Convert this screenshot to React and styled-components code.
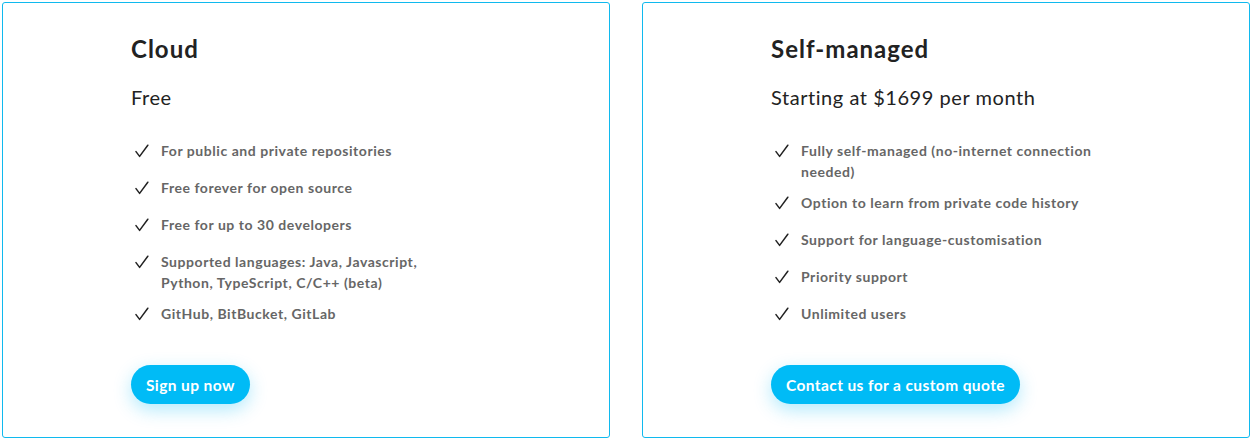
import React from "react";
import styled, { createGlobalStyle } from "styled-components";

const plans = [
  {
    name: "Cloud",
    price: "Free",
    features: [
      "For public and private repositories",
      "Free forever for open source",
      "Free for up to 30 developers",
      "Supported languages: Java, Javascript, Python, TypeScript, C/C++ (beta)",
      "GitHub, BitBucket, GitLab",
    ],
    cta: "Sign up now",
  },
  {
    name: "Self-managed",
    price: "Starting at $1699 per month",
    features: [
      "Fully self-managed (no-internet connection needed)",
      "Option to learn from private code history",
      "Support for language-customisation",
      "Priority support",
      "Unlimited users",
    ],
    cta: "Contact us for a custom quote",
  },
];

function Check() {
  return (
    <svg width="14" height="14" viewBox="0 0 14 14" fill="none">
      <path
        d="M1 7.6 L4.6 12.4 L12.8 1.2"
        stroke="#222"
        strokeWidth="1.5"
        strokeLinecap="round"
        strokeLinejoin="round"
      />
    </svg>
  );
}

function App() {
  return (
    <>
      <GlobalStyle />
      <Page>
        {plans.map((plan) => (
          <Card key={plan.name}>
            <Name>{plan.name}</Name>
            <Price>{plan.price}</Price>
            <Features>
              {plan.features.map((f) => (
                <Feature key={f}>
                  <IconBox>
                    <Check />
                  </IconBox>
                  <FeatureText>{f}</FeatureText>
                </Feature>
              ))}
            </Features>
            <Button>{plan.cta}</Button>
          </Card>
        ))}
      </Page>
    </>
  );
}

const GlobalStyle = createGlobalStyle`
  body {
    margin: 0;
    background: #fff;
    font-family: "Lato", "Noto Sans", sans-serif;
  }
`;

const Page = styled.div`
  display: grid;
  grid-template-columns: 608px 608px;
  gap: 32px;
  padding: 2px;
`;

const Card = styled.div`
  height: 436px;
  box-sizing: border-box;
  border: 1px solid #10b9ee;
  border-radius: 3px;
  padding: 30px 0 0 128px;
  display: flex;
  flex-direction: column;
  align-items: flex-start;
`;

const Name = styled.h2`
  margin: 0;
  font-size: 24px;
  line-height: 32px;
  font-weight: 700;
  letter-spacing: 1px;
  color: #222;
`;

const Price = styled.div`
  margin-top: 18px;
  font-size: 20px;
  line-height: 28px;
  letter-spacing: 0.55px;
  color: #222;
`;

const Features = styled.ul`
  list-style: none;
  margin: 29px 0 0;
  padding: 0;
  width: 335px;
  display: flex;
  flex-direction: column;
  gap: 10px;
  flex: 1;
`;

const Feature = styled.li`
  display: flex;
  align-items: flex-start;
  min-height: 27px;
`;

const IconBox = styled.span`
  width: 30px;
  flex: none;
  padding: 2px 0 0 4px;
  box-sizing: border-box;
`;

const FeatureText = styled.span`
  width: 300px;
  font-size: 14px;
  line-height: 21px;
  font-weight: 700;
  letter-spacing: 0.55px;
  color: #666;
`;

const Button = styled.button`
  margin-bottom: 33px;
  height: 39px;
  padding: 0 15px;
  border: none;
  border-radius: 20px;
  background: #00bbf6;
  color: #fff;
  font-family: inherit;
  font-size: 15.5px;
  font-weight: 700;
  letter-spacing: 0.4px;
  box-shadow: 0 6px 18px rgba(0, 187, 246, 0.3);
`;

export default App;
